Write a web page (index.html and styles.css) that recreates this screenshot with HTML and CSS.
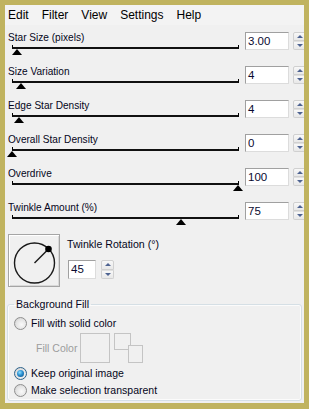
FILE: index.html
```html
<!DOCTYPE html>
<html>
<head>
<meta charset="utf-8">
<link rel="stylesheet" href="styles.css">
</head>
<body>
<div class="win">
  <div class="menubar">
    <span>Edit</span><span>Filter</span><span>View</span><span>Settings</span><span>Help</span>
  </div>

  <div class="row first">
    <div class="ctl">
      <div class="lbl">Star Size (pixels)</div>
      <div class="track"><div class="thumb" style="--p:2.4"></div></div>
    </div>
    <div class="num">3.00</div>
    <div class="spin"><div class="sb up"></div><div class="sb dn"></div></div>
  </div>

  <div class="row">
    <div class="ctl">
      <div class="lbl">Size Variation</div>
      <div class="track"><div class="thumb" style="--p:4"></div></div>
    </div>
    <div class="num">4</div>
    <div class="spin"><div class="sb up"></div><div class="sb dn"></div></div>
  </div>

  <div class="row">
    <div class="ctl">
      <div class="lbl">Edge Star Density</div>
      <div class="track"><div class="thumb" style="--p:3.5"></div></div>
    </div>
    <div class="num">4</div>
    <div class="spin"><div class="sb up"></div><div class="sb dn"></div></div>
  </div>

  <div class="row">
    <div class="ctl">
      <div class="lbl">Overall Star Density</div>
      <div class="track"><div class="thumb" style="--p:0"></div></div>
    </div>
    <div class="num">0</div>
    <div class="spin"><div class="sb up"></div><div class="sb dn"></div></div>
  </div>

  <div class="row">
    <div class="ctl">
      <div class="lbl">Overdrive</div>
      <div class="track"><div class="thumb" style="--p:100"></div></div>
    </div>
    <div class="num">100</div>
    <div class="spin"><div class="sb up"></div><div class="sb dn"></div></div>
  </div>

  <div class="row">
    <div class="ctl">
      <div class="lbl">Twinkle Amount (%)</div>
      <div class="track"><div class="thumb" style="--p:75"></div></div>
    </div>
    <div class="num">75</div>
    <div class="spin"><div class="sb up"></div><div class="sb dn"></div></div>
  </div>

  <div class="dialrow">
    <div class="dialbox">
      <svg width="50" height="51" viewBox="0 0 50 51">
        <circle cx="25.5" cy="28" r="20" fill="none" stroke="#1a1a1a" stroke-width="1.4"/>
        <line x1="25.5" y1="28" x2="39.5" y2="14" stroke="#1a1a1a" stroke-width="1.4"/>
        <circle cx="39.5" cy="14" r="3.3" fill="#000"/>
      </svg>
    </div>
    <div class="dialctl">
      <div class="lbl2">Twinkle Rotation (°)</div>
      <div class="numrow">
        <div class="num">45</div>
        <div class="spin"><div class="sb up"></div><div class="sb dn"></div></div>
      </div>
    </div>
  </div>

  <fieldset class="group">
    <legend>Background Fill</legend>
    <div class="radio"><span class="rb"></span>Fill with solid color</div>
    <div class="fillrow">
      <span class="fc">Fill Color</span>
      <span class="swatch"></span>
      <span class="pair"><span class="sq1"></span><span class="sq2"></span></span>
    </div>
    <div class="radio"><span class="rb on"></span>Keep original image</div>
    <div class="radio"><span class="rb"></span>Make selection transparent</div>
  </fieldset>
</div>
</body>
</html>
```

FILE: styles.css
```css
html, body {
  margin: 0;
  padding: 0;
}
body {
  background: #c0b35f;
  width: 309px;
  height: 409px;
  overflow: hidden;
  font-family: "Liberation Sans", Arial, sans-serif;
  font-size: 10.5px;
  color: #000;
}
.win {
  margin: 5px 5px 6px 5px;
  height: 398px;
  background: #f0f0f0;
  display: flex;
  flex-direction: column;
  overflow: hidden;
}
.menubar {
  height: 20px;
  line-height: 20px;
  font-size: 12px;
  display: flex;
  gap: 13px;
  padding-left: 3px;
  background: #f3f3f3;
  flex: none;
}
.row {
  display: flex;
  height: 34px;
  flex: none;
}
.row.first {
  margin-top: 5px;
}
.ctl {
  width: 240px;
  flex: none;
}
.lbl {
  padding: 1px 0 0 3px;
  height: 13px;
  line-height: 13px;
  font-size: 10.1px;
  color: #050520;
  white-space: nowrap;
}
.track {
  position: relative;
  margin: 1px 0 0 7px;
  width: 225px;
  height: 2px;
  border-left: 1px solid #000;
  border-right: 1px solid #000;
  border-bottom: 2px solid #111;
}
.thumb {
  position: absolute;
  top: 4px;
  left: calc(var(--p) * 2.26px - 6.5px);
  width: 0;
  height: 0;
  border-left: 5.5px solid transparent;
  border-right: 5.5px solid transparent;
  border-bottom: 6px solid #000;
}
.num {
  margin-top: 2px;
  width: 40px;
  height: 16px;
  line-height: 16px;
  padding-left: 2px;
  box-sizing: content-box;
  background: #fff;
  border: 1px solid;
  border-color: #a0a0a0 #dcdcdc #dcdcdc #a0a0a0;
  font-size: 11.5px;
  color: #0a0a30;
  flex: none;
}
.spin {
  margin: 2px 0 0 4px;
  width: 15px;
  height: 18px;
  display: flex;
  flex-direction: column;
  flex: none;
}
.sb {
  flex: 1;
  position: relative;
  border: 1px solid #d0d0d0;
  background: linear-gradient(#f8f8f8, #e8e8e8);
  box-sizing: border-box;
}
.sb.up { border-radius: 2px 2px 0 0; }
.sb.dn { border-radius: 0 0 2px 2px; border-top-color: #e0e0e0; }
.sb::after {
  content: "";
  position: absolute;
  left: 3px;
  width: 0;
  height: 0;
  border-left: 3px solid transparent;
  border-right: 3px solid transparent;
}
.sb.up::after {
  top: 2px;
  border-bottom: 3px solid #4e6391;
}
.sb.dn::after {
  top: 2px;
  border-top: 3px solid #4e6391;
}
.dialrow {
  display: flex;
  height: 54px;
  flex: none;
}
.dialbox {
  margin-left: 3px;
  width: 50px;
  height: 51px;
  border: 1px solid #a5a5a5;
  box-shadow: inset 1px 1px 0 #fff, inset -1px -1px 0 #d8d8d8;
  flex: none;
}
.dialbox svg {
  display: block;
}
.dialctl {
  margin-left: 7px;
  padding-top: 3px;
}
.lbl2 {
  font-size: 10.6px;
  height: 14px;
  line-height: 14px;
  color: #050520;
  white-space: nowrap;
}
.numrow {
  display: flex;
  margin-top: 9px;
  margin-left: 1px;
}
.numrow .num {
  margin-top: 0;
  width: 24px;
  height: 17px;
}
.numrow .spin {
  margin: 0 0 0 5px;
  width: 13px;
  height: 19px;
}
.group {
  margin: 9px 2px 0 2px;
  padding: 5px 6px 3px 6px;
  border: 1px solid #d5dfe5;
  border-radius: 3px;
  box-shadow: inset 0 0 0 1px #fbfbfb;
  flex: none;
}
.group legend {
  padding: 0 2px;
  height: 14px;
  line-height: 14px;
  font-size: 10.6px;
  color: #050520;
}
.radio {
  display: flex;
  align-items: center;
  gap: 4px;
  height: 14px;
  line-height: 14px;
  font-size: 10.5px;
  color: #050520;
  white-space: nowrap;
}
.fillrow + .radio,
.radio + .radio {
  margin-top: 3px;
}
.rb {
  width: 11px;
  height: 11px;
  border: 1px solid #8f8f8f;
  border-radius: 50%;
  background: radial-gradient(circle at 60% 60%, #fafafa 0%, #e4e4e4 55%, #c4c4c4 100%);
  position: relative;
  flex: none;
}
.rb.on {
  border-color: #2c628b;
}
.rb.on::after {
  content: "";
  position: absolute;
  left: 2px;
  top: 2px;
  width: 7px;
  height: 7px;
  border-radius: 50%;
  background: radial-gradient(circle at 40% 35%, #8ee0ff 0%, #2a8ed0 45%, #0c4a7a 100%);
}
.fillrow {
  margin-top: 3px;
  height: 30px;
  display: flex;
  align-items: center;
}
.fc {
  margin-left: 22px;
  width: 44px;
  color: #9d9d9d;
  font-size: 10.5px;
}
.swatch {
  border: 1px solid #c4c4c4;
  box-sizing: content-box;
  width: 28px;
  height: 28px;
}
.pair {
  position: relative;
  margin-left: 4px;
  width: 29px;
  height: 30px;
}
.sq1, .sq2 {
  position: absolute;
  border: 1px solid #c4c4c4;
  background: #f0f0f0;
}
.sq1 {
  left: 0;
  top: 0;
  width: 15px;
  height: 15px;
}
.sq2 {
  left: 14px;
  top: 12px;
  width: 13px;
  height: 16px;
}
```
